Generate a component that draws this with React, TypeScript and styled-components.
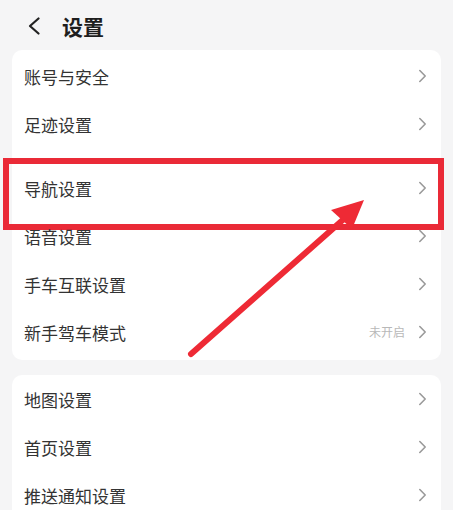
import React from "react";
import styled, { createGlobalStyle, css } from "styled-components";

const Global = createGlobalStyle`
  html, body { margin: 0; padding: 0; background: #f5f5f6; }
  body { font-family: "Noto Sans CJK SC", "Noto Sans", sans-serif; }
  * { box-sizing: border-box; }
`;

const Page = styled.div`
  position: relative;
  width: 453px;
  height: 510px;
  overflow: hidden;
  background: #f5f5f6;
`;

const Header = styled.div`
  height: 50px;
  display: flex;
  align-items: center;
  padding: 2px 0 0 28px;
  gap: 22px;
`;

const Title = styled.div`
  font-size: 21px;
  font-weight: 700;
  color: #1e1e1e;
  line-height: 1;
`;

const Card = styled.div<{ $top: number; $pt: number; $pb: number }>`
  margin: ${(p) => p.$top}px 12px 0;
  background: #ffffff;
  border-radius: 10px;
  padding: ${(p) => p.$pt}px 0 ${(p) => p.$pb}px;
`;

const Row = styled.div<{ $highlight?: boolean }>`
  position: relative;
  height: 48px;
  display: flex;
  align-items: center;
  padding: 0 14px 0 12px;
  ${(p) =>
    p.$highlight &&
    css`
      margin-top: 16px;
      &::after {
        content: "";
        position: absolute;
        left: -9px;
        right: -3px;
        top: -6px;
        bottom: -18px;
        border: 6px solid #ea2a37;
        pointer-events: none;
      }
    `}
`;

const Label = styled.span`
  flex: 1;
  font-size: 17px;
  color: #333333;
  line-height: 1;
`;

const Status = styled.span`
  font-size: 12px;
  color: #b8b8b8;
  margin-right: 13px;
  line-height: 1;
`;

const Overlay = styled.svg`
  position: absolute;
  left: 0;
  top: 0;
  pointer-events: none;
`;

const Chevron = () => (
  <svg width="9" height="14" viewBox="0 0 9 14">
    <path d="M1.8 1.5 L7.2 7 L1.8 12.5" fill="none" stroke="#9a9a9a" strokeWidth="1.6" strokeLinecap="round" strokeLinejoin="round" />
  </svg>
);

const Back = () => (
  <svg width="12" height="18" viewBox="0 0 12 18">
    <path d="M10.5 1.5 L2 9 L10.5 16.5" fill="none" stroke="#222" strokeWidth="2.2" strokeLinecap="round" strokeLinejoin="round" />
  </svg>
);

type Item = { label: string; status?: string; highlight?: boolean };

const group1: Item[] = [
  { label: "账号与安全" },
  { label: "足迹设置" },
  { label: "导航设置", highlight: true },
  { label: "语音设置" },
  { label: "手车互联设置" },
  { label: "新手驾车模式", status: "未开启" },
];

const group2: Item[] = [
  { label: "地图设置" },
  { label: "首页设置" },
  { label: "推送通知设置" },
];

const renderRows = (items: Item[]) =>
  items.map((it) => (
    <Row key={it.label} $highlight={it.highlight}>
      <Label>{it.label}</Label>
      {it.status && <Status>{it.status}</Status>}
      <Chevron />
    </Row>
  ));

export default function App() {
  return (
    <Page>
      <Global />
      <Header>
        <Back />
        <Title>设置</Title>
      </Header>
      <Card $top={0} $pt={2} $pb={4}>
        {renderRows(group1)}
      </Card>
      <Card $top={15} $pt={0} $pb={2}>
        {renderRows(group2)}
      </Card>
      <Overlay width="453" height="510" viewBox="0 0 453 510">
        <line x1="191" y1="354" x2="345" y2="218" stroke="#ee2a35" strokeWidth="6" strokeLinecap="round" />
        <polygon points="364,200 331,210 352,229" fill="#ee2a35" />
      </Overlay>
    </Page>
  );
}
